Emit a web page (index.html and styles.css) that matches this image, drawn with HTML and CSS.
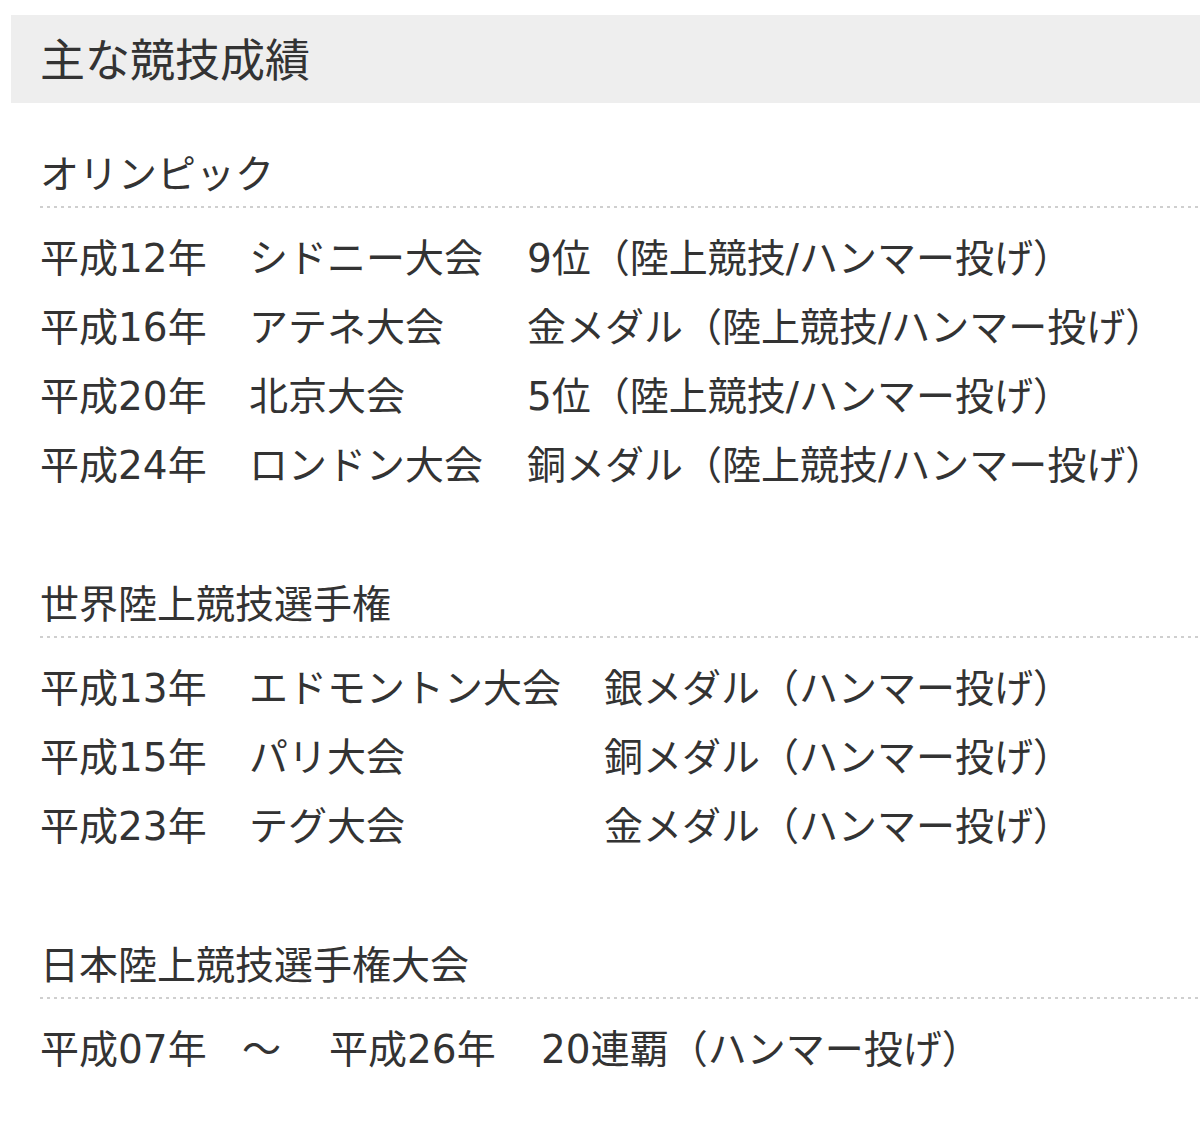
FILE: index.html
```html
<!DOCTYPE html>
<html lang="ja">
<head>
<meta charset="utf-8">
<title>主な競技成績</title>
<link rel="stylesheet" href="styles.css">
</head>
<body>
<div class="page">
  <h2 class="title">主な競技成績</h2>

  <section class="group">
    <h3 class="group-head">オリンピック</h3>
    <div class="records records-olympic">
      <span>平成12年</span><span>シドニー大会</span><span>9位（陸上競技/ハンマー投げ）</span>
      <span>平成16年</span><span>アテネ大会</span><span>金メダル（陸上競技/ハンマー投げ）</span>
      <span>平成20年</span><span>北京大会</span><span>5位（陸上競技/ハンマー投げ）</span>
      <span>平成24年</span><span>ロンドン大会</span><span>銅メダル（陸上競技/ハンマー投げ）</span>
    </div>
  </section>

  <section class="group">
    <h3 class="group-head">世界陸上競技選手権</h3>
    <div class="records records-world">
      <span>平成13年</span><span>エドモントン大会</span><span>銀メダル（ハンマー投げ）</span>
      <span>平成15年</span><span>パリ大会</span><span>銅メダル（ハンマー投げ）</span>
      <span>平成23年</span><span>テグ大会</span><span>金メダル（ハンマー投げ）</span>
    </div>
  </section>

  <section class="group">
    <h3 class="group-head">日本陸上競技選手権大会</h3>
    <div class="records records-japan">
      <span>平成07年</span><span>～</span><span>平成26年</span><span>20連覇（ハンマー投げ）</span>
    </div>
  </section>
</div>
</body>
</html>
```

FILE: styles.css
```css
html, body {
  margin: 0;
  padding: 0;
  background: #ffffff;
}

body {
  font-family: "Noto Sans CJK JP", "Noto Sans", sans-serif;
  color: #333333;
}

.page {
  padding: 15px 0 40px 11px;
}

.title {
  margin: 0;
  height: 88px;
  background: #eeeeee;
  padding-left: 29px;
  font-size: 45px;
  font-weight: 400;
  line-height: 86px;
}

.group {
  margin-left: 29px;
  margin-top: 67px;
}

.group:first-of-type {
  margin-top: 34px;
}

.group-head {
  margin: 0;
  font-size: 39px;
  font-weight: 400;
  line-height: 69px;
  padding-bottom: 2px;
  background-image: linear-gradient(to right, #cfcfcf 50%, transparent 50%);
  background-size: 7px 2px;
  background-repeat: repeat-x;
  background-position: left bottom;
}

.records {
  display: grid;
  margin-top: 16px;
  font-family: "DejaVu Sans", "Noto Sans CJK JP", sans-serif;
  font-size: 39px;
  line-height: 69px;
  white-space: nowrap;
}

.records-olympic {
  grid-template-columns: 209px 278px auto;
}

.records-world {
  grid-template-columns: 209px 355px auto;
}

.records-japan {
  grid-template-columns: 202px 87px 212px auto;
}
```
